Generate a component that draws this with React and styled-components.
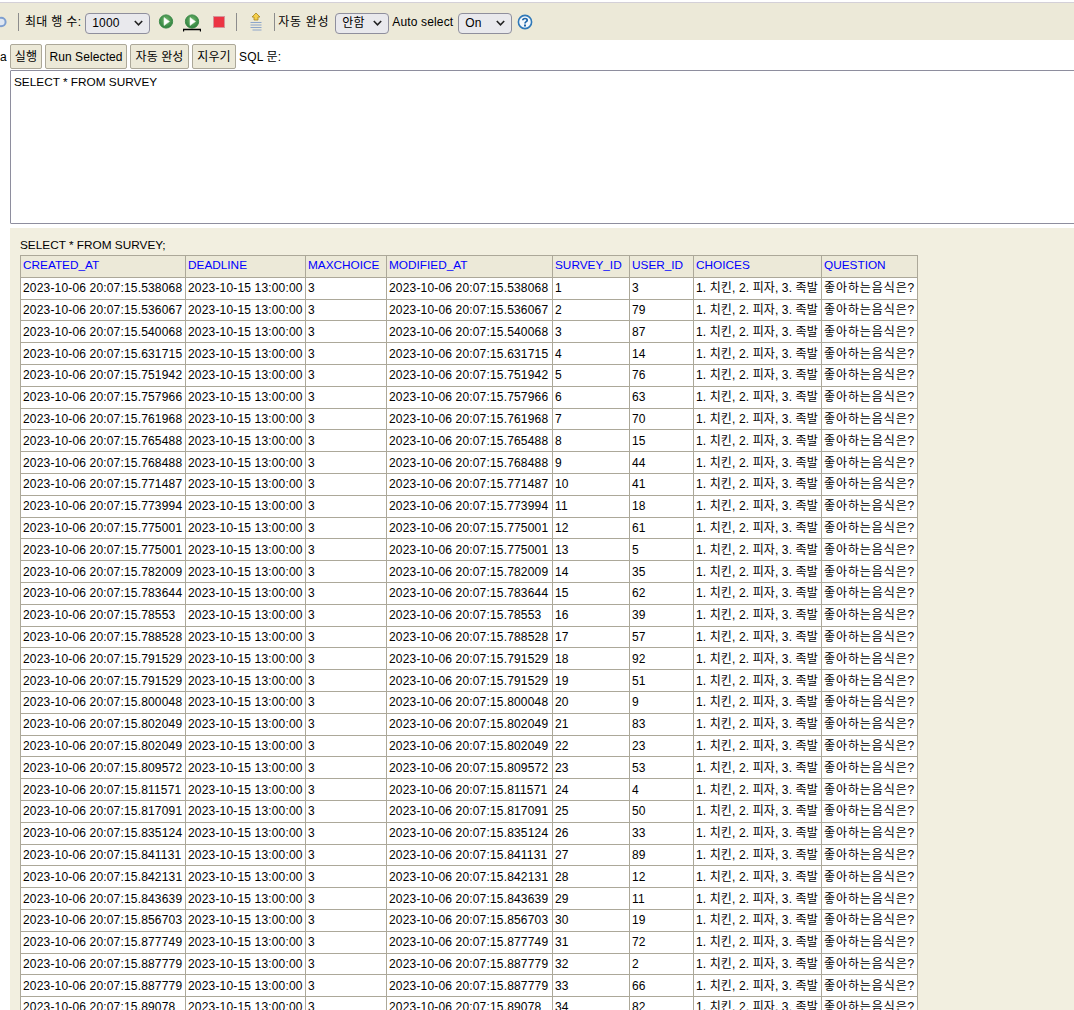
import styled, { createGlobalStyle } from 'styled-components';

const rows = [
  ['538068', 3], ['536067', 79], ['540068', 87], ['631715', 14], ['751942', 76], ['757966', 63],
  ['761968', 70], ['765488', 15], ['768488', 44], ['771487', 41], ['773994', 18], ['775001', 61],
  ['775001', 5], ['782009', 35], ['783644', 62], ['78553', 39], ['788528', 57], ['791529', 92],
  ['791529', 51], ['800048', 9], ['802049', 83], ['802049', 23], ['809572', 53], ['811571', 4],
  ['817091', 50], ['835124', 33], ['841131', 89], ['842131', 12], ['843639', 11], ['856703', 19],
  ['877749', 72], ['887779', 2], ['887779', 66], ['89078', 82],
];

const columns = [
  ['CREATED_AT', 165], ['DEADLINE', 120], ['MAXCHOICE', 81], ['MODIFIED_AT', 166],
  ['SURVEY_ID', 77], ['USER_ID', 64], ['CHOICES', 128], ['QUESTION', 96],
];

function PlayIcon({ bar }) {
  const id = bar ? 'playFillBar' : 'playFill';
  return (
    <svg width="18" height="20" viewBox="0 0 18 20">
      <defs>
        <radialGradient id={id} cx="0.5" cy="0.4" r="0.6">
          <stop offset="0" stopColor="#74b96f" />
          <stop offset="1" stopColor="#2c7f3c" />
        </radialGradient>
      </defs>
      <circle cx="9" cy="9.5" r="6.6" fill={`url(#${id})`} stroke="#3b8a48" />
      <path d="M7 5.5 L12.5 9.5 L7 13.5 Z" fill="#fff" stroke="#e6f2e2" strokeWidth="0.6" />
      {bar && <path d="M0.5 19.6 V17.5 H17.5 V19.6" fill="none" stroke="#000" strokeWidth="1.3" />}
    </svg>
  );
}

function StopIcon() {
  return (
    <svg width="12" height="12" viewBox="0 0 12 12">
      <rect x="0.5" y="0.5" width="11" height="11" fill="#ec3443" stroke="#d4959a" />
    </svg>
  );
}

function AutoCompleteIcon() {
  return (
    <svg width="14" height="20" viewBox="0 0 14 20">
      <path d="M7 1 L11 5 H9 V8 H5 V5 H3 Z" fill="#f5cf4a" stroke="#a8861f" strokeWidth="0.8" />
      <path d="M1.5 10.5 H12.5 M1.5 13 H12.5 M1.5 15.5 H12.5 M3.5 18 H12.5" stroke="#8ea6ca" strokeWidth="1" />
    </svg>
  );
}

function HelpIcon() {
  return (
    <svg width="16" height="16" viewBox="0 0 16 16">
      <circle cx="8" cy="8" r="6.6" fill="#f4f8fc" stroke="#2f78b8" strokeWidth="1.6" />
      <path d="M5.8 6.2 C5.9 3.9 10.2 3.9 10.2 6.2 C10.2 7.8 8 7.6 8 9.6" fill="none" stroke="#1f66aa" strokeWidth="1.7" />
      <rect x="7" y="10.5" width="2" height="2" fill="#1f66aa" />
    </svg>
  );
}

function CutIcon() {
  return (
    <svg width="7" height="12" viewBox="0 0 7 12">
      <ellipse cx="1" cy="6" rx="4.6" ry="4.2" fill="#dfe7f2" stroke="#7e9fd0" strokeWidth="2" />
    </svg>
  );
}

function Chevron() {
  return (
    <svg width="9" height="6" viewBox="0 0 9 6">
      <path d="M0.8 1 L4.5 4.8 L8.2 1" fill="none" stroke="#222" strokeWidth="1.6" />
    </svg>
  );
}

export default function App() {
  return (
    <Page>
      <GlobalStyle />
      <TopEdge />
      <Toolbar>
        <Tool $left={0}><CutIcon /></Tool>
        <Separator $left={11} />
        <Label $left={6} $spacing={0.3}>최대 행 수:</Label>
        <Select $width={65} $left={4}>1000<Chevron /></Select>
        <Tool $left={7}><PlayIcon /></Tool>
        <Tool $left={8}><PlayIcon bar /></Tool>
        <Tool $left={12}><StopIcon /></Tool>
        <Separator $left={11} />
        <Tool $left={12}><AutoCompleteIcon /></Tool>
        <Separator $left={11} />
        <Label $left={3} $spacing={0.7}>자동 완성</Label>
        <Select $width={54} $left={6}>안함<Chevron /></Select>
        <Label $left={3}>Auto select</Label>
        <Select $width={54} $left={5}>On<Chevron /></Select>
        <Tool $left={5}><HelpIcon /></Tool>
      </Toolbar>
      <QueryBar>
        <CutText>a</CutText>
        <Button $width={32}>실행</Button>
        <Button $width={82}>Run Selected</Button>
        <Button $width={59}>자동 완성</Button>
        <Button $width={44}>지우기</Button>
        <Label $left={0}>SQL 문:</Label>
      </QueryBar>
      <SqlBox>SELECT * FROM SURVEY</SqlBox>
      <Results>
        <Statement>SELECT * FROM SURVEY;</Statement>
        <Table>
          <colgroup>
            {columns.map(([name, width]) => <col key={name} style={{ width }} />)}
          </colgroup>
          <thead>
            <tr>
              {columns.map(([name]) => <Th key={name}>{name}</Th>)}
            </tr>
          </thead>
          <tbody>
            {rows.map(([micros, userId], i) => (
              <tr key={i}>
                <Td>2023-10-06 20:07:15.{micros}</Td>
                <Td>2023-10-15 13:00:00</Td>
                <Td>3</Td>
                <Td>2023-10-06 20:07:15.{micros}</Td>
                <Td>{i + 1}</Td>
                <Td>{userId}</Td>
                <Td $spacing={0.12}>1. 치킨, 2. 피자, 3. 족발</Td>
                <Td $spacing={0.9}>좋아하는음식은?</Td>
              </tr>
            ))}
          </tbody>
        </Table>
      </Results>
    </Page>
  );
}

const GlobalStyle = createGlobalStyle`
  html, body {
    margin: 0;
    padding: 0;
    background: #fff;
    overflow: hidden;
  }
`;

const Page = styled.div`
  width: 1074px;
  height: 1010px;
  overflow: hidden;
  font-family: "Liberation Sans", "Noto Sans CJK KR", sans-serif;
  font-size: 12px;
  line-height: 14px;
  color: #000;
`;

const TopEdge = styled.div`
  height: 2px;
  background: #fff;
  border-bottom: 1px solid #d4d0d8;
`;

const Toolbar = styled.div`
  height: 37px;
  background: #ece9d8;
  display: flex;
  align-items: center;
`;

const Tool = styled.span`
  display: flex;
  align-items: center;
  margin-left: ${(p) => p.$left}px;
`;

const Separator = styled.span`
  width: 1px;
  height: 18px;
  background: #8c8c8c;
  margin-left: ${(p) => p.$left}px;
`;

const Label = styled.span`
  margin-top: 1px;
  margin-left: ${(p) => p.$left}px;
  letter-spacing: ${(p) => p.$spacing ?? 0.15}px;
  white-space: nowrap;
`;

const Select = styled.div`
  box-sizing: border-box;
  width: ${(p) => p.$width}px;
  height: 21px;
  margin-top: 4px;
  margin-left: ${(p) => p.$left}px;
  padding: 0 6px 2px;
  display: flex;
  align-items: center;
  justify-content: space-between;
  background: #e9e9ed;
  border: 1px solid #8f8f9d;
  border-radius: 4px;
  letter-spacing: 0.15px;
`;

const QueryBar = styled.div`
  box-sizing: border-box;
  height: 30px;
  padding-top: 3px;
  display: flex;
  align-items: center;
  gap: 3px;
`;

const CutText = styled.span`
  width: 7px;
  overflow: hidden;
`;

const Button = styled.button`
  box-sizing: border-box;
  width: ${(p) => p.$width}px;
  height: 25px;
  padding: 0;
  background: #ece9d8;
  border: 1px solid #aca899;
  border-radius: 2px;
  font: inherit;
  letter-spacing: 0.1px;
  color: #000;
  white-space: nowrap;
`;

const SqlBox = styled.div`
  box-sizing: border-box;
  height: 154px;
  margin-left: 10px;
  margin-right: -4px;
  padding: 4px 3px;
  background: #fff;
  border: 1px solid #8e8e9e;
  border-radius: 1px;
  font-size: 11.8px;
`;

const Results = styled.div`
  margin: 4px 0 0 10px;
  padding: 10px 0 0 10px;
  background: #f2efe0;
`;

const Statement = styled.div`
  height: 17px;
  line-height: 15px;
  font-size: 11.8px;
`;

const Table = styled.table`
  table-layout: fixed;
  width: 898px;
  border-collapse: collapse;
  background: #fff;
`;

const Th = styled.th`
  box-sizing: border-box;
  height: 21.8px;
  padding: 2.5px 2px 0;
  border: 1px solid #aca899;
  background: #ece9d8;
  color: #0000ff;
  font-weight: normal;
  font-size: 11.8px;
  line-height: 12px;
  text-align: left;
  vertical-align: top;
  white-space: nowrap;
`;

const Td = styled.td`
  height: 20.8px;
  padding: 0 2px;
  border: 1px solid #aca899;
  letter-spacing: ${(p) => p.$spacing ?? 0.17}px;
  white-space: nowrap;
`;
